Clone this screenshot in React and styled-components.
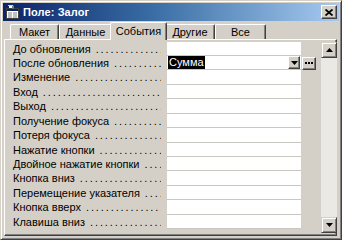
import React from 'react';
import styled, { createGlobalStyle } from 'styled-components';

const GlobalStyle = createGlobalStyle`
  html, body { margin: 0; padding: 0; background: #d4d0c8; }
  body { font-family: 'Liberation Sans', Arial, sans-serif; font-size: 11px; }
`;

const Window = styled.div`
  width: 342px;
  height: 240px;
  box-sizing: border-box;
  background: #d4d0c8;
  border: 1px solid;
  border-color: #d4d0c8 #404040 #404040 #d4d0c8;
  box-shadow: inset 1px 1px 0 #ffffff, inset -1px -1px 0 #808080;
  padding: 2px;
  display: flex;
  flex-direction: column;
  overflow: hidden;
`;

const TitleBar = styled.div`
  height: 18px;
  flex: none;
  display: flex;
  align-items: center;
  padding: 0 2px 0 2px;
  gap: 3px;
  background: linear-gradient(to right, #0a246a 0%, #3a6ea5 45%, #a6caf0 100%);
`;

const Title = styled.div`
  flex: 1;
  color: #ffffff;
  font-weight: bold;
  font-size: 11px;
  letter-spacing: 0.1px;
`;

const CloseButton = styled.div`
  width: 16px;
  height: 14px;
  box-sizing: border-box;
  background: #d4d0c8;
  border: 1px solid;
  border-color: #ffffff #404040 #404040 #ffffff;
  box-shadow: inset -1px -1px 0 #808080;
  display: flex;
  align-items: center;
  justify-content: center;
`;

const TabRow = styled.div`
  height: 18px;
  flex: none;
  display: flex;
  align-items: flex-end;
  padding-left: 7px;
  position: relative;
  z-index: 1;
`;

const Tab = styled.div`
  box-sizing: border-box;
  width: ${p => p.$w}px;
  height: ${p => (p.$active ? 18 : 15)}px;
  margin: 0 ${p => (p.$active ? -2 : 0)}px ${p => (p.$active ? -1 : 0)}px;
  padding-top: ${p => (p.$active ? 2 : 1)}px;
  background: #d4d0c8;
  border-top: 1px solid #ffffff;
  border-left: 1px solid #ffffff;
  border-right: 1px solid #404040;
  box-shadow: inset -1px 0 0 #808080;
  border-radius: 2px 2px 0 0;
  text-align: center;
  color: #000;
  font-size: 11px;
  z-index: ${p => (p.$active ? 2 : 1)};
`;

const Panel = styled.div`
  flex: 1;
  margin: 0 2px 1px 1px;
  background: #d4d0c8;
  border-top: 1px solid #ffffff;
  border-left: 1px solid #ffffff;
  border-right: 1px solid #404040;
  border-bottom: 1px solid #404040;
  box-shadow: inset -1px -1px 0 #808080;
  display: flex;
  padding: 1.5px 2px 2px 0;
`;

const Grid = styled.div`
  width: 313px;
  display: flex;
  flex-direction: column;
`;

const Row = styled.div`
  display: grid;
  grid-template-columns: 162px 134px 17px;
  height: 14.45px;
  flex: none;
`;

const Label = styled.div`
  width: 156px;
  padding-left: 8px;
  box-sizing: border-box;
  white-space: nowrap;
  overflow: hidden;
  line-height: 14px;
  color: #000;
  &::after {
    content: ' ..............................................';
    letter-spacing: 1.9px;
  }
`;

const Value = styled.div`
  background: #ffffff;
  border-bottom: 1.5px solid #c9c7c2;
  display: flex;
  align-items: center;
  padding-left: 1px;
`;

const Selected = styled.span`
  background: #000000;
  color: #ffffff;
  line-height: 13px;
  padding: 0 1px;
`;

const Spacer = styled.div`
  flex: 1;
`;

const SmallButton = styled.div`
  width: ${p => p.$w}px;
  height: 13px;
  box-sizing: border-box;
  background: #d4d0c8;
  border: 1px solid;
  border-color: #ffffff #404040 #404040 #ffffff;
  box-shadow: inset -1px -1px 0 #808080;
  display: flex;
  align-items: center;
  justify-content: center;
  margin-right: ${p => p.$mr || 0}px;
`;

const Extra = styled.div`
  display: flex;
  align-items: flex-start;
  justify-content: flex-end;
  padding-top: 1px;
`;

const Scrollbar = styled.div`
  width: 16px;
  margin-left: 3px;
  display: flex;
  flex-direction: column;
  background: #ebe9e4;
`;

const ScrollButton = styled.div`
  width: 16px;
  height: 16px;
  box-sizing: border-box;
  background: #d4d0c8;
  border: 1px solid;
  border-color: #d4d0c8 #404040 #404040 #d4d0c8;
  box-shadow: inset 1px 1px 0 #ffffff, inset -1px -1px 0 #808080;
  display: flex;
  align-items: center;
  justify-content: center;
`;

const Track = styled.div`
  flex: 1;
`;

const Arrow = ({ up }) => (
  <svg width="7" height="4" viewBox="0 0 7 4">
    <path d={up ? 'M3.5 0 L7 4 L0 4 Z' : 'M0 0 L7 0 L3.5 4 Z'} fill="#000" />
  </svg>
);

const Dots = () => (
  <svg width="8" height="2" viewBox="0 0 8 2">
    <rect x="0" y="0" width="2" height="2" fill="#000" />
    <rect x="3" y="0" width="2" height="2" fill="#000" />
    <rect x="6" y="0" width="2" height="2" fill="#000" />
  </svg>
);

const SheetIcon = () => (
  <svg width="15" height="14" viewBox="0 0 15 14">
    <rect x="1.5" y="3.5" width="12" height="10" fill="#ffffff" stroke="#404040" />
    <rect x="2" y="4" width="11" height="2" fill="#0a246a" />
    <path d="M3 8h4M8 8h4M3 10h4M8 10h4M3 12h4M8 12h4" stroke="#808080" />
    <path d="M3 0.5h5v3" stroke="#d4d0c8" fill="none" />
    <rect x="4" y="1" width="3" height="2" fill="#ffffff" />
  </svg>
);

const CloseX = () => (
  <svg width="8" height="7" viewBox="0 0 8 7">
    <path d="M0.5 0.5 L7.5 6.5 M7.5 0.5 L0.5 6.5" stroke="#000" strokeWidth="1.8" />
  </svg>
);

const tabs = [
  { name: 'Макет', w: 49 },
  { name: 'Данные', w: 53 },
  { name: 'События', w: 57, active: true },
  { name: 'Другие', w: 50 },
  { name: 'Все', w: 51 },
];

const events = [
  'До обновления',
  'После обновления',
  'Изменение',
  'Вход',
  'Выход',
  'Получение фокуса',
  'Потеря фокуса',
  'Нажатие кнопки',
  'Двойное нажатие кнопки',
  'Кнопка вниз',
  'Перемещение указателя',
  'Кнопка вверх',
  'Клавиша вниз',
];

function App() {
  return (
    <>
      <GlobalStyle />
      <Window>
        <TitleBar>
          <SheetIcon />
          <Title>Поле: Залог</Title>
          <CloseButton><CloseX /></CloseButton>
        </TitleBar>
        <TabRow>
          {tabs.map(t => (
            <Tab key={t.name} $w={t.w} $active={t.active}>{t.name}</Tab>
          ))}
        </TabRow>
        <Panel>
          <Grid>
            {events.map((e, i) => (
              <Row key={e}>
                <Label>{e}</Label>
                <Value>
                  {i === 1 && (
                    <>
                      <Selected>Сумма</Selected>
                      <Spacer />
                      <SmallButton $w={12} $mr={1}><Arrow /></SmallButton>
                    </>
                  )}
                </Value>
                <Extra>
                  {i === 1 && <SmallButton $w={14} $mr={2}><Dots /></SmallButton>}
                </Extra>
              </Row>
            ))}
          </Grid>
          <Scrollbar>
            <ScrollButton><Arrow up /></ScrollButton>
            <Track />
            <ScrollButton><Arrow /></ScrollButton>
          </Scrollbar>
        </Panel>
      </Window>
    </>
  );
}

export default App;
